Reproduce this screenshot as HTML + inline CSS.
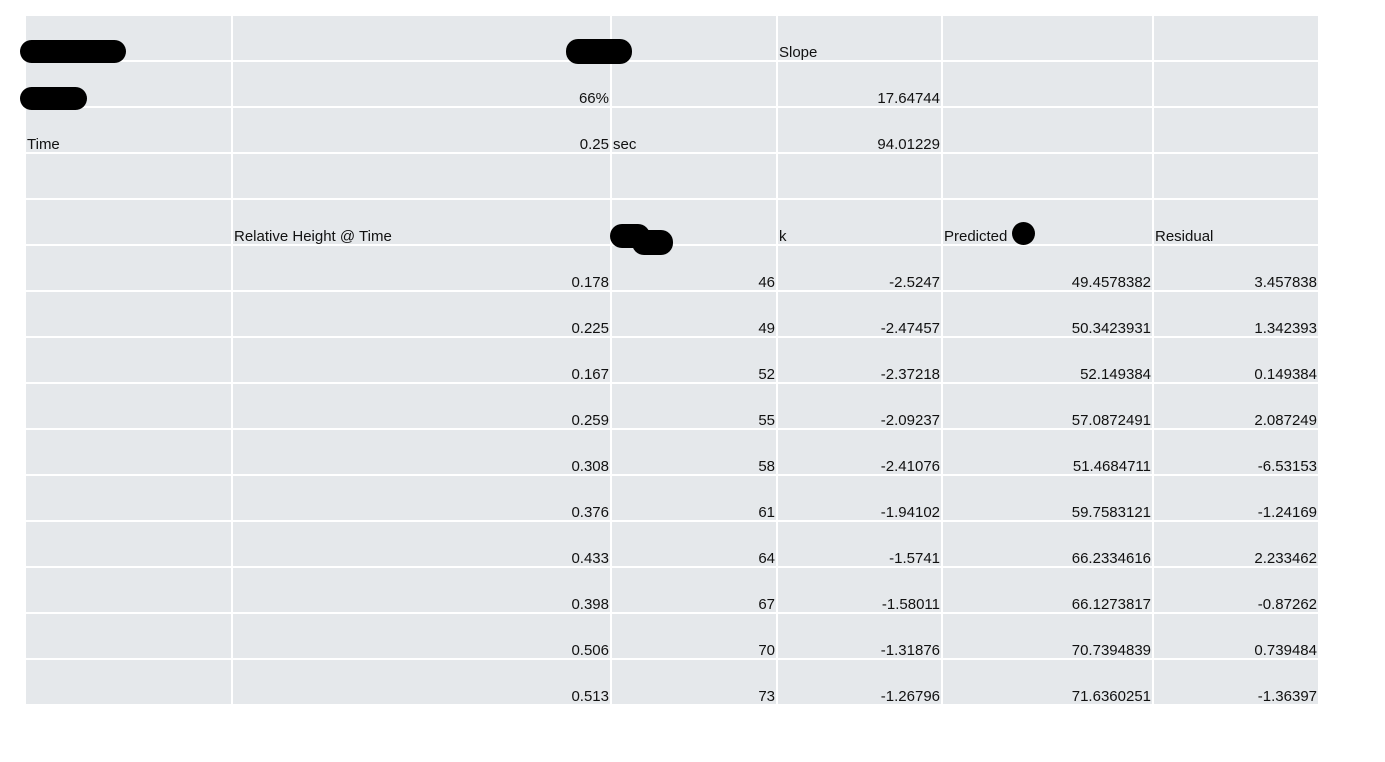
<!DOCTYPE html>
<html><head><style>
body{margin:0;background:#fff;width:1385px;height:762px;position:relative;overflow:hidden;font-family:"Liberation Sans",sans-serif;font-size:15px;color:#111}
table{position:absolute;left:26px;top:16px;border-collapse:collapse;background:#e5e8eb;table-layout:fixed}
td{height:44px;border-right:2px solid #fff;border-bottom:2px solid #fff;padding:0 1px 0 1px;vertical-align:bottom;white-space:nowrap;overflow:visible;line-height:14px}
td:last-child{border-right:none}
tr:last-child td{border-bottom:none}
.r{text-align:right}
.b{position:absolute;background:#000;border-radius:12px}
</style></head><body>
<table>
<colgroup><col style="width:206px"><col style="width:379px"><col style="width:166px"><col style="width:165px"><col style="width:211px"><col style="width:165px"></colgroup>
<tr><td></td><td></td><td></td><td>Slope</td><td></td><td></td></tr>
<tr><td></td><td class="r">66%</td><td></td><td class="r">17.64744</td><td></td><td></td></tr>
<tr><td>Time</td><td class="r">0.25</td><td>sec</td><td class="r">94.01229</td><td></td><td></td></tr>
<tr><td></td><td></td><td></td><td></td><td></td><td></td></tr>
<tr><td></td><td>Relative Height @ Time</td><td></td><td>k</td><td>Predicted</td><td>Residual</td></tr>
<tr><td></td><td class="r">0.178</td><td class="r">46</td><td class="r">-2.5247</td><td class="r">49.4578382</td><td class="r">3.457838</td></tr>
<tr><td></td><td class="r">0.225</td><td class="r">49</td><td class="r">-2.47457</td><td class="r">50.3423931</td><td class="r">1.342393</td></tr>
<tr><td></td><td class="r">0.167</td><td class="r">52</td><td class="r">-2.37218</td><td class="r">52.149384</td><td class="r">0.149384</td></tr>
<tr><td></td><td class="r">0.259</td><td class="r">55</td><td class="r">-2.09237</td><td class="r">57.0872491</td><td class="r">2.087249</td></tr>
<tr><td></td><td class="r">0.308</td><td class="r">58</td><td class="r">-2.41076</td><td class="r">51.4684711</td><td class="r">-6.53153</td></tr>
<tr><td></td><td class="r">0.376</td><td class="r">61</td><td class="r">-1.94102</td><td class="r">59.7583121</td><td class="r">-1.24169</td></tr>
<tr><td></td><td class="r">0.433</td><td class="r">64</td><td class="r">-1.5741</td><td class="r">66.2334616</td><td class="r">2.233462</td></tr>
<tr><td></td><td class="r">0.398</td><td class="r">67</td><td class="r">-1.58011</td><td class="r">66.1273817</td><td class="r">-0.87262</td></tr>
<tr><td></td><td class="r">0.506</td><td class="r">70</td><td class="r">-1.31876</td><td class="r">70.7394839</td><td class="r">0.739484</td></tr>
<tr><td></td><td class="r">0.513</td><td class="r">73</td><td class="r">-1.26796</td><td class="r">71.6360251</td><td class="r">-1.36397</td></tr>
</table>
<div class="b" style="left:20px;top:40px;width:106px;height:23px"></div>
<div class="b" style="left:566px;top:39px;width:66px;height:25px"></div>
<div class="b" style="left:20px;top:87px;width:67px;height:23px"></div>
<div class="b" style="left:610px;top:224px;width:40px;height:24px"></div>
<div class="b" style="left:632px;top:230px;width:41px;height:25px"></div>
<div class="b" style="left:1012px;top:222px;width:23px;height:23px;border-radius:50%"></div>
</body></html>
